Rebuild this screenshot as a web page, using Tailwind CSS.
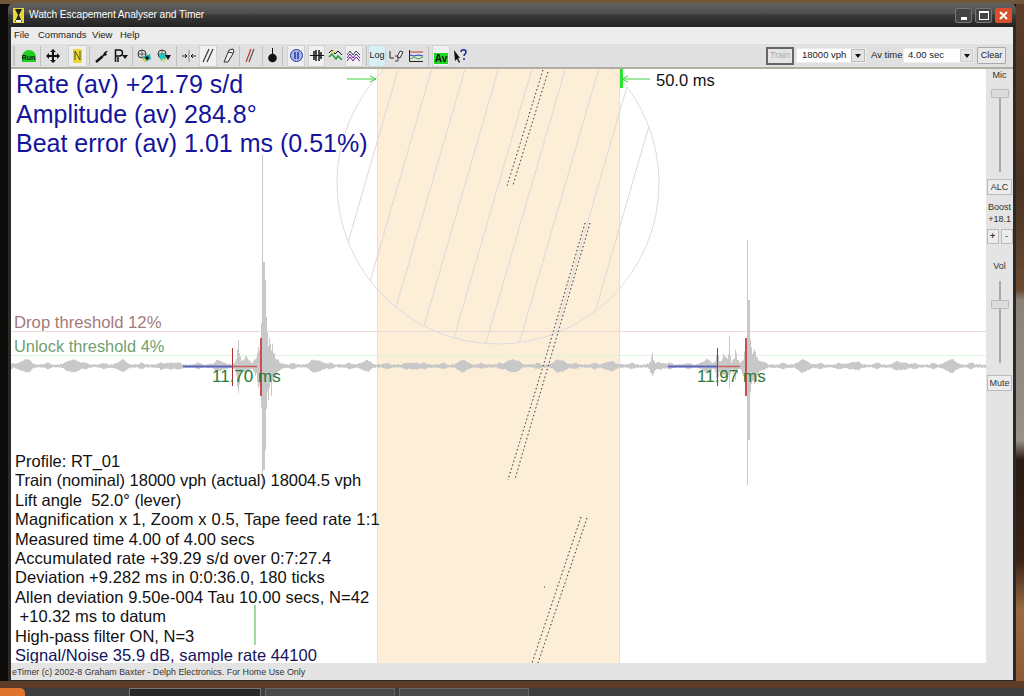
<!DOCTYPE html>
<html lang="en">
  <head>
    <meta charset="UTF-8" />
    <title>Watch Escapement Analyser and Timer</title>
    <script src="https://cdn.jsdelivr.net/npm/@tailwindcss/browser@4"></script>
  </head>
  <body class="w-[1024px] h-[696px] overflow-hidden relative bg-[#0e0c0a] font-['Liberation_Sans',sans-serif]">
    <!-- desktop -->
    <div class="absolute right-0 top-0 w-[8px] h-[688px] bg-[linear-gradient(to_bottom,#5c3c26_0,#4a3220_190px,#6a4a30_290px,#8a8278_300px,#9a9288_440px,#2a1a12_460px,#3a2214_560px,#9a6a42_610px,#8a5a38_688px)]"></div>
    <div class="absolute left-0 right-0 top-0 h-[4px] bg-[#6f5638]"></div>
    <div class="absolute left-0 right-0 top-[681px] h-[7px] bg-[#5e3c26]"></div>
    <div class="absolute left-0 right-0 top-[688px] h-[8px] bg-[#3e3e3e] flex">
      <div class="w-[25px] h-full bg-[#e0742c] rounded-tr-[5px]"></div>
      <div class="ml-[104px] w-[132px] h-full bg-[#262626] border border-b-0 border-[#777]"></div>
      <div class="ml-[4px] w-[130px] h-full bg-[#4a4a4a] border border-b-0 border-[#666]"></div>
      <div class="ml-[4px] w-[130px] h-full bg-[#4a4a4a] border border-b-0 border-[#666]"></div>
    </div>

    <!-- window -->
    <div class="absolute left-[8px] top-[3px] w-[1008px] h-[678px] rounded-t-[6px] bg-[#2a2a2a] flex flex-col overflow-hidden px-[3px] pb-[1px]">
      <!-- title bar -->
      <div class="-mx-[3px] h-[24px] shrink-0 bg-[linear-gradient(to_bottom,#626262,#4c4c4c_45%,#3a3a3a_50%,#222)] flex items-center pl-[5px] pr-[4px]">
        <svg class="w-[11px] h-[15px]" viewBox="0 0 11 15">
          <rect width="11" height="15" fill="#e8d838" />
          <path d="M2 1h7L6 7l3 7H2l3-7z" fill="#222" />
          <path d="M3 12h5v2H3z" fill="#fff" />
        </svg>
        <span class="ml-[5px] text-white text-[10.200px] tracking-[-0.08px]">Watch Escapement Analyser and Timer</span>
        <div class="ml-auto flex items-center gap-[3px]">
          <div class="w-[17px] h-[15px] rounded-[2px] border border-[#777] bg-[#444] flex items-end justify-center pb-[2px]"><i class="w-[6px] h-[3px] bg-white"></i></div>
          <div class="w-[17px] h-[15px] rounded-[2px] border border-[#777] bg-[#444] flex items-center justify-center"><i class="w-[10px] h-[9px] border border-white border-t-[2px]"></i></div>
          <div class="w-[17px] h-[15px] rounded-[2px] bg-[#d8502c] flex items-center justify-center">
            <svg class="w-[9px] h-[9px]" viewBox="0 0 9 9"><path d="M1 1l7 7M8 1l-7 7" stroke="#fff" stroke-width="2" /></svg>
          </div>
        </div>
      </div>

      <!-- menu -->
      <div class="h-[16px] shrink-0 bg-[#ececec] flex items-center text-[9.500px] text-[#222]">
        <span class="ml-[3px] w-[24px]">File</span>
        <span class="w-[54px]">Commands</span>
        <span class="w-[28px]">View</span>
        <span>Help</span>
      </div>

      <!-- toolbar -->
      <div class="h-[26px] shrink-0 bg-[#e0e0e0] border-t border-[#f0f0f0] border-b-2 border-b-[#b0aea4] flex items-center text-[9.500px] text-[#222]">
        <i class="ml-[2px] w-[2px] h-[20px] bg-[#c4c4c4] mr-[3px]"></i>
        <div class="w-[21px] h-[22px] flex items-center justify-center">
          <span class="w-[14px] h-[12px] rounded-t-full bg-[#22d022] text-[7px] leading-[15px] text-center text-[#111] font-bold">Run</span>
        </div>
        <i class="w-px h-[20px] bg-[#c0c0c0] mx-[1px]"></i>
        <div class="w-[21px] h-[22px] flex items-center justify-center">
          <svg class="w-[14px] h-[14px]" viewBox="0 0 14 14"><path d="M7 0l3 3H8v3h3V4l3 3-3 3V8H8v3h2l-3 3-3-3h2V8H3v2L0 7l3-3v2h3V3H4z" fill="#111" /></svg>
        </div>
        <div class="ml-[5px] w-[19px] h-[22px] bg-[#f0f0f0] border border-[#d0d0d0] flex items-center justify-center">
          <svg class="w-[9px] h-[14px]" viewBox="0 0 9 14"><rect width="9" height="14" fill="#ecd838" /><path d="M2 11V2l5 9V2" stroke="#5a4a10" fill="none" /></svg>
        </div>
        <i class="w-px h-[20px] bg-[#c0c0c0] ml-[2px] mr-[3px]"></i>
        <div class="w-[18px] h-[22px] flex items-center justify-center">
          <svg class="w-[14px] h-[14px]" viewBox="0 0 14 14"><path d="M1 13l7-6" stroke="#111" stroke-width="2.400" /><path d="M8 7c0-3 2-5 5-5l-2 2 1 2-3 1z" fill="#111" /></svg>
        </div>
        <div class="ml-[1px] w-[18px] h-[22px] flex items-center justify-center">
          <svg class="w-[14px] h-[14px]" viewBox="0 0 14 14"><path d="M1.500 13V1h4a2.500 2.500 0 0 1 0 6h-4M4 13V8" stroke="#111" stroke-width="1.500" fill="none" /><path d="M8 6h6l-3 4z" fill="#111" /></svg>
        </div>
        <i class="w-px h-[20px] bg-[#c0c0c0] ml-[2px] mr-[2px]"></i>
        <div class="w-[18px] h-[22px] flex items-center justify-center">
          <svg class="w-[14px] h-[14px]" viewBox="0 0 14 14"><circle cx="5" cy="5" r="4" fill="none" stroke="#333" /><path d="M1 5h8M5 1v8" stroke="#333" stroke-width=".7" /><path d="M5 8l8-3 1 5-6 3z" fill="#18b8b0" /><path d="M3 9l5 4 2-3z" fill="#e8d838" /><circle cx="10" cy="9" r="1.800" fill="#111" /></svg>
        </div>
        <div class="ml-[2px] w-[18px] h-[22px] flex items-center justify-center">
          <svg class="w-[14px] h-[14px]" viewBox="0 0 14 14"><circle cx="5" cy="5" r="4" fill="none" stroke="#333" /><path d="M1 5h8M5 1v8" stroke="#333" stroke-width=".7" /><path d="M2 6l6-2 1 6-5 2z" fill="#18c8c0" /><path d="M4 11l3-2 1 4z" fill="#e8d838" /><path d="M8 6h6l-3 5z" fill="#111" /></svg>
        </div>
        <i class="w-px h-[20px] bg-[#c0c0c0] ml-[3px] mr-[3px]"></i>
        <div class="w-[17px] h-[22px] flex items-center justify-center">
          <svg class="w-[14px] h-[14px]" viewBox="0 0 14 14"><path d="M7 1v12" stroke="#888" /><path d="M0 7h5M5 7L3 5M5 7L3 9M14 7H9M9 7l2-2M9 7l2 2" stroke="#222" fill="none" /></svg>
        </div>
        <div class="ml-[2px] w-[18px] h-[22px] bg-[#f0f0f0] border border-[#d4d4d4] flex items-center justify-center">
          <svg class="w-[12px] h-[15px]" viewBox="0 0 12 15"><path d="M1 14L7 1M5 14L11 1" stroke="#333" stroke-width="1.200" /></svg>
        </div>
        <div class="ml-[3px] w-[17px] h-[22px] flex items-center justify-center">
          <svg class="w-[12px] h-[15px]" viewBox="0 0 12 15"><path d="M1 14l5-12 4-1 1 3-6 10z" fill="#eee" stroke="#333" /><path d="M5 4l5 1" stroke="#333" /></svg>
        </div>
        <i class="w-px h-[20px] bg-[#c0c0c0] ml-[2px] mr-[2px]"></i>
        <div class="w-[16px] h-[22px] flex items-center justify-center">
          <svg class="w-[11px] h-[15px]" viewBox="0 0 11 15"><path d="M1 14L6 1" stroke="#c03030" stroke-width="1.200" /><path d="M4 14L9 1" stroke="#555" stroke-width="1.200" /></svg>
        </div>
        <i class="w-px h-[20px] bg-[#c0c0c0] ml-[4px] mr-[1px]"></i>
        <div class="w-[16px] h-[22px] flex items-center justify-center">
          <svg class="w-[9px] h-[15px]" viewBox="0 0 9 15"><path d="M4 0h1v6H4z" fill="#111" /><circle cx="4.500" cy="10" r="4.300" fill="#111" /></svg>
        </div>
        <i class="w-px h-[20px] bg-[#c0c0c0] ml-[2px] mr-[4px]"></i>
        <div class="w-[18px] h-[22px] bg-[#f0f0f0] border border-[#d4d4d4] flex items-center justify-center">
          <svg class="w-[13px] h-[13px]" viewBox="0 0 13 13"><circle cx="6.500" cy="6.500" r="6" fill="#a8b8e8" stroke="#2838a0" /><path d="M5 3v7M8 3v7" stroke="#2838a0" stroke-width="1.500" /></svg>
        </div>
        <div class="ml-[3px] w-[17px] h-[22px] bg-[#f0f0f0] border border-[#d4d4d4] flex items-center justify-center">
          <svg class="w-[14px] h-[11px]" viewBox="0 0 14 11"><path d="M0 5.500h14" stroke="#111" /><path d="M4 1v9M6 0v11M9 0v11M11 2v7" stroke="#111" stroke-width="1.500" /></svg>
        </div>
        <div class="ml-[2px] w-[17px] h-[22px] flex items-center justify-center">
          <svg class="w-[15px] h-[15px]" viewBox="0 0 15 15"><path d="M1 5l3-3 3 4 3-3 4 4" stroke="#111" fill="none" /><path d="M1 9l3-3 4 5 2-3 4 4" stroke="#1f9a30" stroke-width="1.500" fill="none" /><circle cx="5" cy="4" r="1.500" fill="#e8d838" /></svg>
        </div>
        <div class="ml-[1px] w-[18px] h-[22px] bg-[#f0f0f0] border border-[#d4d4d4] flex items-center justify-center">
          <svg class="w-[14px] h-[13px]" viewBox="0 0 14 13"><path d="M0 6l3-4 3 4 3-4 4 4" stroke="#444" fill="none" /><path d="M0 9l3-4 3 4 3-4 4 4M0 12l3-4 3 4 3-4 4 4" stroke="#6a1a9a" fill="none" /></svg>
        </div>
        <i class="w-px h-[20px] bg-[#c0c0c0] ml-[3px] mr-[1px]"></i>
        <div class="w-[18px] h-[22px] bg-[#d8f0f4] border border-[#d0d8dc] flex items-center justify-center text-[9px] text-[#222] leading-none">Log</div>
        <div class="ml-[3px] w-[15px] h-[22px] flex items-center justify-center">
          <svg class="w-[15px] h-[13px]" viewBox="0 0 15 13"><path d="M1 2v7h4" stroke="#222" fill="none" /><path d="M8 8l3-6 3 1-3 6z" fill="#eee" stroke="#333" /><path d="M6 7h3v5H6" stroke="#444" fill="none" /></svg>
        </div>
        <div class="ml-[5px] w-[14px] h-[22px] flex items-center justify-center">
          <svg class="w-[14px] h-[12px]" viewBox="0 0 14 12"><path d="M.5 0v11.500H14" stroke="#222" fill="none" /><path d="M1 2h13" stroke="#c03030" /><path d="M1 5l4 1 4-1 5 1" stroke="#2838c0" fill="none" /><path d="M1 9l4-2 4 2 5-2" stroke="#30b040" fill="none" /></svg>
        </div>
        <i class="w-px h-[20px] bg-[#c0c0c0] ml-[5px] mr-[3px]"></i>
        <div class="w-[18px] h-[22px] bg-[#f0f0f0] border border-[#d4d4d4] flex items-end justify-center">
          <span class="w-[14px] h-[11px] mb-[2px] bg-[#20d820] text-[10px] font-bold text-[#111] leading-[11px] text-center">Av</span>
        </div>
        <div class="ml-[4px] w-[14px] h-[22px] flex items-center justify-center">
          <svg class="w-[14px] h-[14px]" viewBox="0 0 14 14"><path d="M0 1l6 8-2 0 2 4-1 1-2-4-2 2z" fill="#111" /><path d="M7 3c0-3 5-3 5 0 0 2-2 2-2 4M10 9v2" stroke="#1a2a90" stroke-width="1.500" fill="none" /></svg>
        </div>

        <div class="ml-auto flex items-center whitespace-nowrap">
          <div class="w-[28px] h-[18px] border-2 border-[#666] bg-[#e4e4e4] flex items-center justify-center text-[#aaa] text-[9px]">Train</div>
          <div class="ml-[2px] w-[70px] h-[15px] bg-white flex items-center pl-[5px] relative border border-[#ececec]">18000 vph
            <span class="absolute right-0 top-0 bottom-0 w-[14px] bg-[#e4e4e4] border border-[#bbb] flex items-center justify-center"><i class="border-x-[3px] border-x-transparent border-t-[4px] border-t-[#111]"></i></span>
          </div>
          <span class="ml-[5px] w-[32px]">Av time</span>
          <div class="w-[71px] h-[15px] bg-white flex items-center pl-[4px] relative border border-[#ececec]">4.00 sec
            <span class="absolute right-0 top-0 bottom-0 w-[13px] bg-[#e4e4e4] border border-[#ccc] flex items-center justify-center"><i class="border-x-[3px] border-x-transparent border-t-[4px] border-t-[#111]"></i></span>
          </div>
          <div class="ml-[3px] mr-[7px] w-[29px] h-[17px] bg-[#e8e8e8] border border-[#aaa] rounded-[1px] flex items-center justify-center text-[9px]">Clear</div>
        </div>
      </div>

      <!-- body -->
      <div class="flex-1 flex min-h-0">
        <!-- canvas -->
        <div class="w-[976px] relative bg-white overflow-hidden">
          <svg id="scope" class="absolute left-0 top-0" width="976" height="595" viewBox="11 69 976 595">
            <defs>
              <clipPath id="disc"><circle cx="498" cy="183" r="161" /></clipPath>
            </defs>
            <rect x="377" y="69" width="243" height="595" fill="#fdeed8" />
            <path d="M377.500 69v595M619.500 69v595" stroke="#ebe3bc" />
            <circle cx="498" cy="183" r="161" fill="none" stroke="#dcdce4" />
            <g id="hatch" clip-path="url(#disc)" stroke="#dcd8dc" fill="none"></g>
            <path d="M11 331.500h976" stroke="#ecd8d6" />
            <path d="M11 355.500h976" stroke="#def4dc" />
            <path id="wave" fill="none" stroke="#c8c8c8" />
            <!-- timing traces -->
            <g fill="none" stroke="#aaa" stroke-dasharray="2 2">
              <path d="M543 70L507 186M548 72L513 185" />
              <path d="M585 223L545 360L508 480M590 223L550 360L515 479" />
              <path d="M581 517L532 663M587 518L538 663" />
            </g>
            <g fill="none" stroke="#222" stroke-dasharray="1 3" stroke-width=".9">
              <path d="M543 70L507 186M548 72L513 185" />
              <path d="M585 223L545 360L508 480M590 223L550 360L515 479" />
              <path d="M581 517L532 663M587 518L538 663" />
              <path d="M544 587h1" />
            </g>
            <!-- beat markers -->
            <path d="M183 366.500h49M668 366.500h49" stroke="#5c64c0" stroke-width="2" />
            <path d="M232 366.500h25M717 366.500h23" stroke="#c06060" stroke-width="1.500" />
            <path d="M232.500 348v38M717.500 348v38" stroke="#b03030" />
            <path d="M261 338v58M746 338v58" stroke="#c85050" stroke-width="2" />
            <!-- markers -->
            <path d="M347 79h29M370 76l6 3-6 3" stroke="#40d040" fill="none" />
            <path d="M650 79h-28M628 76l-6 3 6 3" stroke="#40d040" fill="none" />
            <path d="M621.500 69v19" stroke="#30e030" stroke-width="3" />
            <path d="M255 605v40" stroke="#80d080" stroke-width="1.500" />
          </svg>

          <span class="absolute left-[645px] top-[2px] text-[16.500px] leading-[18px] text-[#111]">50.0 ms</span>
          <div class="absolute left-[5px] top-[1px] text-[25px] leading-[29.500px] text-[#14149c] whitespace-nowrap">
            <p>Rate (av) +21.79 s/d</p>
            <p>Amplitude (av) 284.8°</p>
            <p>Beat error (av) 1.01 ms (0.51%)</p>
          </div>
          <span class="absolute left-[3px] top-[245px] text-[16.700px] leading-[18px] text-[#a47a7a]">Drop threshold 12%</span>
          <span class="absolute left-[3px] top-[268px] text-[16.400px] leading-[18px] text-[#6f9f72]">Unlock threshold 4%</span>
          <span class="absolute left-[201px] top-[299px] text-[17px] leading-[18px] text-[#2c7a3a]">11.70 ms</span>
          <span class="absolute left-[686px] top-[299px] text-[17px] leading-[18px] text-[#2c7a3a]">11.97 ms</span>
          <div class="absolute left-[4px] top-[383px] text-[16.500px] leading-[19.400px] text-[#111] whitespace-nowrap">
            <p>Profile: RT_01</p>
            <p class="tracking-[-0.02px]">Train (nominal) 18000 vph (actual) 18004.5 vph</p>
            <p>Lift angle&nbsp; 52.0° (lever)</p>
            <p class="tracking-[0.15px]">Magnification x 1, Zoom x 0.5, Tape feed rate 1:1</p>
            <p>Measured time 4.00 of 4.00 secs</p>
            <p class="tracking-[0.12px]">Accumulated rate +39.29 s/d over 0:7:27.4</p>
            <p class="tracking-[0.07px]">Deviation +9.282 ms in 0:0:36.0, 180 ticks</p>
            <p class="tracking-[0.08px]">Allen deviation 9.50e-004 Tau 10.00 secs, N=42</p>
            <p>&nbsp;+10.32 ms to datum</p>
            <p>High-pass filter ON, N=3</p>
            <p class="text-[#14145c] tracking-[0.05px]">Signal/Noise 35.9 dB, sample rate 44100</p>
          </div>
        </div>

        <!-- level panel -->
        <div class="w-[27px] bg-[#e4e4e4] flex flex-col items-center text-[9px] text-[#333] leading-none">
          <span class="mt-[2px] h-[10px]">Mic</span>
          <div class="mt-[8px] h-[83px] w-[18px] relative flex justify-center">
            <i class="w-[2px] h-full bg-[#aaa]"></i>
            <i class="absolute top-0 left-0 w-[18px] h-[9px] bg-[#dcdcdc] border border-[#bbb] rounded-[1px]"></i>
          </div>
          <div class="mt-[7px] w-[25px] h-[16px] bg-[#ececec] border border-[#bbb] flex items-center justify-center">ALC</div>
          <span class="mt-[8px] h-[9px]">Boost</span>
          <span class="mt-[3px] h-[9px] whitespace-nowrap">+18.1</span>
          <div class="mt-[5px] flex gap-[2px]">
            <div class="w-[12px] h-[15px] bg-[#ececec] border border-[#bbb] flex items-center justify-center font-bold">+</div>
            <div class="w-[12px] h-[15px] bg-[#ececec] border border-[#bbb] flex items-center justify-center">-</div>
          </div>
          <span class="mt-[18px] h-[10px]">Vol</span>
          <div class="mt-[9px] h-[82px] w-[18px] relative flex justify-center">
            <i class="w-[2px] h-full bg-[#aaa]"></i>
            <i class="absolute top-[19px] left-0 w-[18px] h-[9px] bg-[#dcdcdc] border border-[#bbb] rounded-[1px]"></i>
          </div>
          <div class="mt-[12px] w-[25px] h-[16px] bg-[#ececec] border border-[#bbb] flex items-center justify-center">Mute</div>
        </div>
      </div>

      <!-- status -->
      <div class="h-[17px] shrink-0 bg-[#e4e4e4] flex items-center text-[8.900px] text-[#333] pl-[1px] pt-[3px]">eTimer (c) 2002-8 Graham Baxter - Delph Electronics. For Home Use Only</div>
    </div>

    <script>
      // hatch chords across the balance disc, spaced 33.4px apart at the top of the canvas
      const hatch = document.getElementById("hatch");
      let hatchPath = "";
      for (let k = 0; k < 9; k++) {
        const x = 398 + k * 33.4;
        hatchPath += `M${x} 70L${x - 0.29 * 300} 370`;
      }
      hatch.innerHTML = `<path d="${hatchPath}" />`;

      // seeded noise so the trace is the same on every load
      let seed = 7;
      const rnd = () => {
        seed = (seed * 16807) % 2147483647;
        return seed / 2147483647;
      };

      // [centre x, height up, depth down, decay width]
      const bursts = [
        [238, 42, 42, 1.5], [245, 16, 14, 4], [264, 100, 100, 4], [271, 30, 30, 5],
        [652, 18, 18, 2], [717, 24, 22, 2], [724, 16, 14, 5], [729, 36, 36, 1],
        [735, 20, 16, 3], [748, 60, 60, 3], [754, 26, 26, 4],
      ];
      let d = "";
      for (let x = 11; x < 987; x += 1) {
        let up = 0.8 + rnd() * 1.2;
        let down = 0.8 + rnd() * 1.2;
        // the noise floor swells into big blobs with smaller ones between
        const blob = Math.pow(Math.abs(Math.sin(x / 15.5)), 10) * (0.7 + 0.3 * Math.sin(x / 37));
        const small = Math.pow(Math.abs(Math.sin(x / 6)), 8) * 0.35;
        up += (Math.abs(blob) + small) * 5;
        down += (Math.abs(blob) + small) * 5;
        for (const [cx, a, b, w] of bursts) {
          const fall = Math.exp(-Math.abs(x - cx) / w);
          up = Math.max(up, a * fall * (0.5 + 0.5 * rnd()));
          down = Math.max(down, b * fall * (0.5 + 0.5 * rnd()));
        }
        d += `M${x + 0.5} ${(366 - up).toFixed(1)}V${(366 + down).toFixed(1)}`;
      }
      // the two main beats: thick core with a thin spike on top
      d += "M262.500 155V490M747.500 240V485";
      d += "M263.500 262V470M264.500 262V470M265.500 280V450M748.500 300V440M749.500 300V440";
      document.getElementById("wave").setAttribute("d", d);
    </script>
  </body>
</html>
